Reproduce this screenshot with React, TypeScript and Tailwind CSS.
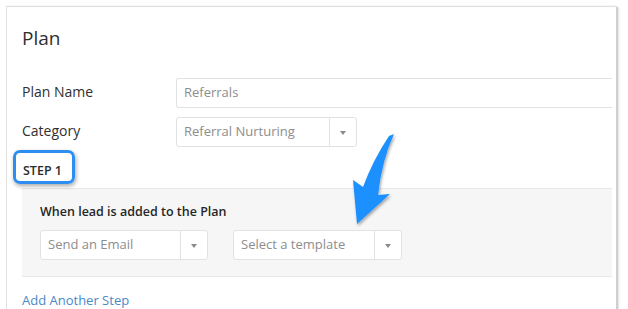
import React from 'react';

const Caret: React.FC = () => (
    <span className="block w-0 h-0 mt-[1px] border-l-[3px] border-r-[3px] border-t-[4px] border-l-transparent border-r-transparent border-t-[#8a8a8a]" />
);

const SelectBox: React.FC<{ value: string; className?: string }> = ({ value, className }) => (
    <div className={`flex h-[30px] bg-white border border-[#e2e2e2] rounded-[3px] ${className ?? ''}`}>
        <div className="flex-1 flex items-center pl-[7px] text-[13px] text-[#8d8d8d]">{value}</div>
        <div className="w-[27px] flex items-center justify-center border-l border-[#e2e2e2]">
            <Caret />
        </div>
    </div>
);

const App: React.FC = () => {
    return (
        <div className="relative w-[628px] h-[309px] bg-white overflow-hidden" style={{ fontFamily: '"Open Sans", "Liberation Sans", sans-serif' }}>
            <div className="ml-[6px] mt-[6px] w-[612px] h-[400px] border border-[#e0e0e0] border-r-2 border-r-[#cfcfcf] rounded-tr-[3px] shadow-[1px_0_2px_rgba(0,0,0,0.12)] pl-[15px] pr-[4px] pt-[19px]">
                <h1 className="text-[19px] leading-[24px] text-[#2f2f2f]">Plan</h1>

                <div className="mt-[28px] flex items-center">
                    <div className="w-[154px] pb-[4px] text-[14px] text-[#2f2f2f]">Plan Name</div>
                    <div className="flex-1 h-[30px] flex items-center pl-[7px] border border-r-0 border-[#e2e2e2] rounded-l-[3px] text-[13px] text-[#8d8d8d]">
                        Referrals
                    </div>
                </div>

                <div className="mt-[9px] flex items-center">
                    <div className="w-[154px] pb-[4px] text-[14px] text-[#2f2f2f]">Category</div>
                    <SelectBox value="Referral Nurturing" className="w-[181px]" />
                </div>

                <div className="mt-[16px] pl-[1px] text-[12.5px] leading-[16px] font-semibold text-[#2b2b2b]">STEP 1</div>

                <div className="mt-[9px] bg-[#f6f6f6] border-t border-b border-[#e8e8e8] pl-[18px] pt-[15px] pb-[16px]">
                    <div className="text-[12.5px] leading-[16px] font-semibold text-[#262626]">When lead is added to the Plan</div>
                    <div className="mt-[10px] flex gap-[25px]">
                        <SelectBox value="Send an Email" className="w-[168px]" />
                        <SelectBox value="Select a template" className="w-[169px]" />
                    </div>
                </div>

                <div className="mt-[14px] text-[13px] leading-[18px] text-[#4a88c8]">Add Another Step</div>
            </div>

            {/* highlight around STEP 1 */}
            <div className="absolute left-[13px] top-[150px] w-[62px] h-[34px] border-[3px] border-[#2d8ef2] rounded-[7px] shadow-[1px_2px_4px_rgba(0,0,0,0.35)]" />

            {/* annotation arrow */}
            <svg className="absolute left-0 top-0 pointer-events-none" width="628" height="309" viewBox="0 0 628 309">
                <defs>
                    <filter id="sh" x="-30%" y="-30%" width="160%" height="160%">
                        <feDropShadow dx="1" dy="2" stdDeviation="1.5" floodColor="#000" floodOpacity="0.35" />
                    </filter>
                </defs>
                <path
                    d="M389 136 L394 134 Q382 160 378 195 L390 194 L357 224 L353 180 L363 187 Q373 160 389 136 Z"
                    fill="#1e90ff"
                    filter="url(#sh)"
                />
            </svg>
        </div>
    );
};

export default App;
